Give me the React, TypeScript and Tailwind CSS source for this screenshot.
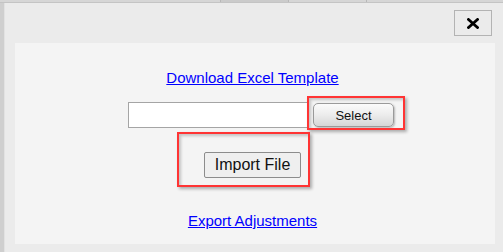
export default function App() {
  return (
    <div className="w-[503px] h-[252px] bg-[#d3d3d3] overflow-hidden font-['Liberation_Sans',Arial,sans-serif] flex flex-col">
      {/* grid header strip behind the dialog */}
      <div className="h-[3px] flex shrink-0 border-b border-[#c4c4c4]">
        <div className="w-[221px] bg-[#d6d6d6] border-r border-[#b8b8b8]" />
        <div className="w-[68px] bg-[#cbcbcb] border-r border-[#b8b8b8]" />
        <div className="w-[78px] bg-[#d6d6d6] border-r border-[#b8b8b8]" />
        <div className="flex-1 bg-[#d6d6d6]" />
      </div>

      <div className="flex flex-1">
        <div className="w-[4px] bg-[#cfcfcf]" />

        {/* dialog */}
        <div className="flex-1 bg-[#ebebeb] border-l border-[#e2e2e2] flex flex-col">
          <div className="h-[40px] flex justify-end pt-[7px] pr-[11px]">
            <button className="w-[38px] h-[26px] border border-[#b3b3b3] bg-[#ebebeb] flex items-center justify-center">
              <svg width="12" height="11" viewBox="0 0 12 11">
                <path d="M1.5 1.5 L10.5 9.5 M10.5 1.5 L1.5 9.5" stroke="#000" strokeWidth="2.8" strokeLinecap="square" />
              </svg>
            </button>
          </div>

          <div className="ml-[10px] mr-[8px] h-[201px] bg-[#f4f4f4] flex flex-col">
            <div className="pt-[26px] flex justify-center pr-[5px]">
              <a href="#" className="text-[15px] leading-[17px] text-[#0000ff] underline">
                Download Excel Template
              </a>
            </div>

            <div className="mt-[16px] flex items-center ml-[113px]">
              <input type="text" className="w-[180px] h-[26px] bg-white border border-[#a5a5a5] outline-none" />
              <div className="relative ml-[5px]">
                <button className="w-[81px] h-[24px] rounded-[5px] border border-[#9a9a9a] bg-gradient-to-b from-[#fbfbfb] via-[#ececec] to-[#d6d6d6] text-[13px] text-[#111] shadow-[1px_1px_2px_rgba(0,0,0,0.25)]">
                  Select
                </button>
                <div className="absolute left-[-6px] top-[-7px] w-[98px] h-[34px] border-2 border-[#ff3434] shadow-[2px_2px_3px_rgba(0,0,0,0.3),inset_2px_2px_3px_rgba(0,0,0,0.2)]" />
              </div>
            </div>

            <div className="mt-[24px] flex justify-center pr-[5px]">
              <div className="relative">
                <button className="w-[97px] h-[26px] rounded-[2px] border border-[#8c8c8c] bg-[#efefef] text-[16px] text-[#111]">
                  Import File
                </button>
                <div className="absolute left-[-27px] top-[-20px] w-[133px] h-[55px] border-2 border-[#ff3434] shadow-[2px_2px_3px_rgba(0,0,0,0.3),inset_2px_2px_3px_rgba(0,0,0,0.2)]" />
              </div>
            </div>

            <div className="mt-[34px] flex justify-center pr-[5px]">
              <a href="#" className="text-[15px] leading-[17px] text-[#0000ff] underline">
                Export Adjustments
              </a>
            </div>
          </div>
        </div>
      </div>
    </div>
  );
}
